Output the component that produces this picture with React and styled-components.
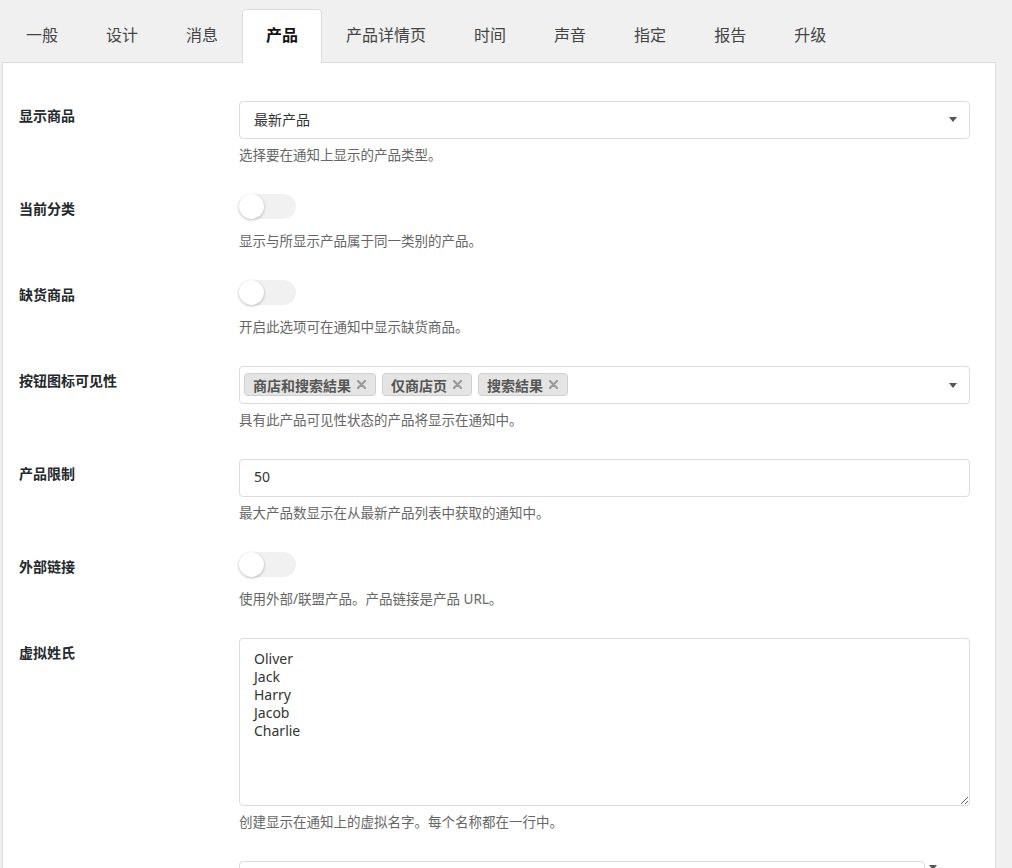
import React from "react";
import styled, { createGlobalStyle } from "styled-components";

const GlobalStyle = createGlobalStyle`
  body {
    margin: 0;
    background: #f0f0f0;
    font-family: "Noto Sans", "Noto Sans CJK SC", sans-serif;
    color: #333;
  }
  * { box-sizing: border-box; }
`;

const Page = styled.div`
  padding: 9px 16px 0 2px;
`;

const TabBar = styled.div`
  display: flex;
  position: relative;
  z-index: 1;
`;

const Tab = styled.div`
  height: 54px;
  padding: 0 23px 6px;
  display: flex;
  align-items: center;
  font-size: 16px;
  color: ${(p) => (p.$active ? "#111" : "#444")};
  font-weight: ${(p) => (p.$active ? 700 : 400)};
  border: 1px solid ${(p) => (p.$active ? "#dcdcdc" : "transparent")};
  border-bottom: none;
  border-radius: 4px 4px 0 0;
  background: ${(p) => (p.$active ? "#fff" : "transparent")};
  margin-bottom: -1px;
`;

const Panel = styled.div`
  background: #fff;
  border: 1px solid #dcdcdc;
  padding: 38px 25px 0 16px;
`;

const Row = styled.div`
  display: grid;
  grid-template-columns: 220px 1fr;
  padding-bottom: 30px;
`;

const Label = styled.div`
  font-size: 14px;
  font-weight: 700;
  line-height: 29px;
  color: #23282d;
`;

const Field = styled.div`
  display: flex;
  flex-direction: column;
`;

const Desc = styled.div`
  margin-top: 7px;
  font-size: 13.5px;
  line-height: 18px;
  color: #666;
`;

const Box = styled.div`
  height: 38px;
  border: 1px solid #dcdcdc;
  border-radius: 4px;
  background: #fff;
  display: flex;
  align-items: center;
  padding: 0 12px 3px 14px;
  font-size: 14px;
  color: #333;
  gap: 6px;
`;

const MultiBox = styled(Box)`
  padding-left: 4px;
  padding-bottom: 1px;
`;

const Value = styled.span`
  flex: 1;
`;

const Caret = styled.span`
  width: 0;
  height: 0;
  border-style: solid;
  border-width: 5px 4px 0 4px;
  border-color: #555 transparent transparent transparent;
  margin-left: ${(p) => (p.$inline ? "0" : "auto")};
  margin-top: ${(p) => (p.$inline ? "4px" : "2px")};
`;

const Tag = styled.span`
  height: 23px;
  display: inline-flex;
  align-items: center;
  gap: 6px;
  padding: 0 9px 0 8px;
  background: #e4e4e4;
  border: 1px solid #cfcfcf;
  border-radius: 4px;
  font-size: 14px;
  font-weight: 600;
  color: #555;
`;

const Toggle = styled.span`
  width: 57px;
  height: 25px;
  border-radius: 13px;
  background: #f1f1f1;
  position: relative;
  margin-bottom: 6px;

  &::after {
    content: "";
    position: absolute;
    left: 0;
    top: 0;
    width: 25px;
    height: 25px;
    border-radius: 50%;
    background: #fff;
    box-shadow: 0 1px 3px rgba(0, 0, 0, 0.28);
  }
`;

const TextArea = styled.textarea`
  width: 100%;
  height: 168px;
  padding: 11px 14px;
  border: 1px solid #dcdcdc;
  border-radius: 4px;
  font-family: "Noto Sans", "Noto Sans CJK SC", sans-serif;
  font-size: 14px;
  line-height: 18px;
  color: #333;
  resize: vertical;
  display: block;
`;

const InlineControls = styled.div`
  display: flex;
  align-items: flex-start;
  gap: 4px;
`;

const ShortBox = styled(Box)`
  width: 686px;
`;

const Cross = () => (
  <svg width="9" height="9" viewBox="0 0 9 9">
    <path d="M1 1L8 8M8 1L1 8" stroke="#999" strokeWidth="2.2" strokeLinecap="round" />
  </svg>
);

const tabs = ["一般", "设计", "消息", "产品", "产品详情页", "时间", "声音", "指定", "报告", "升级"];
const names = ["Oliver", "Jack", "Harry", "Jacob", "Charlie"];

export default function App() {
  return (
    <Page>
      <GlobalStyle />
      <TabBar>
        {tabs.map((t) => (
          <Tab key={t} $active={t === "产品"}>
            {t}
          </Tab>
        ))}
      </TabBar>
      <Panel>
        <Row>
          <Label>显示商品</Label>
          <Field>
            <Box>
              <Value>最新产品</Value>
              <Caret />
            </Box>
            <Desc>选择要在通知上显示的产品类型。</Desc>
          </Field>
        </Row>
        <Row>
          <Label>当前分类</Label>
          <Field>
            <Toggle />
            <Desc>显示与所显示产品属于同一类别的产品。</Desc>
          </Field>
        </Row>
        <Row>
          <Label>缺货商品</Label>
          <Field>
            <Toggle />
            <Desc>开启此选项可在通知中显示缺货商品。</Desc>
          </Field>
        </Row>
        <Row>
          <Label>按钮图标可见性</Label>
          <Field>
            <MultiBox>
              <Tag>
                商店和搜索結果 <Cross />
              </Tag>
              <Tag>
                仅商店页 <Cross />
              </Tag>
              <Tag>
                搜索結果 <Cross />
              </Tag>
              <Caret />
            </MultiBox>
            <Desc>具有此产品可见性状态的产品将显示在通知中。</Desc>
          </Field>
        </Row>
        <Row>
          <Label>产品限制</Label>
          <Field>
            <Box>
              <Value>50</Value>
            </Box>
            <Desc>最大产品数显示在从最新产品列表中获取的通知中。</Desc>
          </Field>
        </Row>
        <Row>
          <Label>外部链接</Label>
          <Field>
            <Toggle />
            <Desc>使用外部/联盟产品。产品链接是产品 URL。</Desc>
          </Field>
        </Row>
        <Row>
          <Label>虚拟姓氏</Label>
          <Field>
            <TextArea defaultValue={names.join("\n")} />
            <Desc>创建显示在通知上的虚拟名字。每个名称都在一行中。</Desc>
          </Field>
        </Row>
        <Row>
          <Label />
          <Field>
            <InlineControls>
              <ShortBox />
              <Caret $inline />
            </InlineControls>
          </Field>
        </Row>
      </Panel>
    </Page>
  );
}
